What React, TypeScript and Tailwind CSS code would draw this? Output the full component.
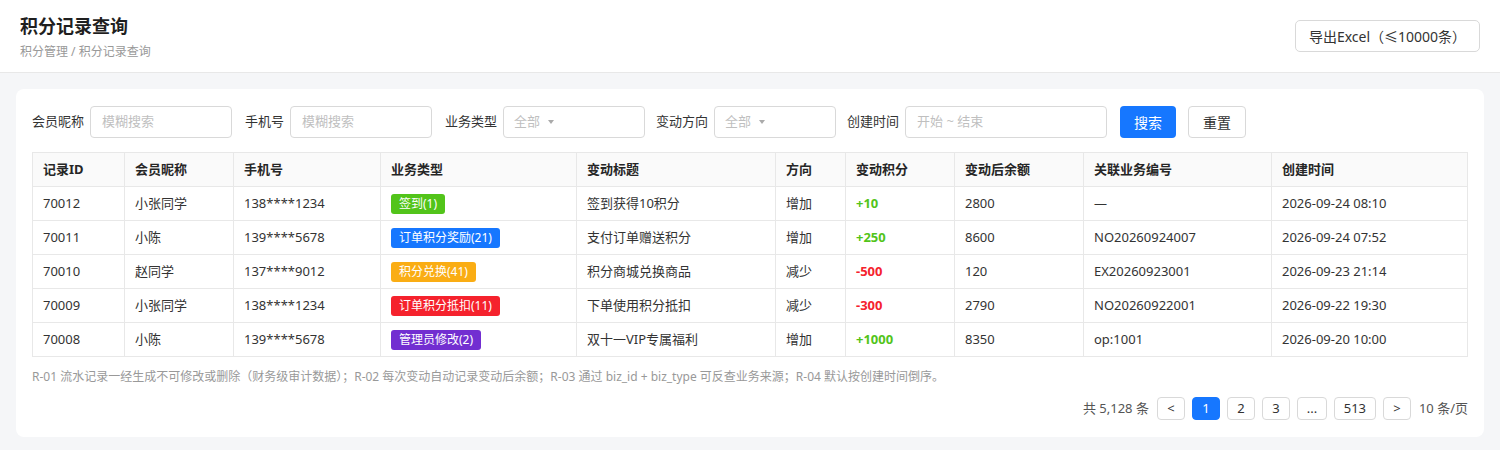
import React from 'react';

const font = { fontFamily: '"Noto Sans", "Noto Sans CJK SC", sans-serif' };

interface Row {
  id: string;
  name: string;
  phone: string;
  tag: string;
  tagColor: string;
  title: string;
  dir: string;
  points: string;
  balance: string;
  biz: string;
  time: string;
}

const rows: Row[] = [
  { id: '70012', name: '小张同学', phone: '138****1234', tag: '签到(1)', tagColor: 'bg-[#52c41a]', title: '签到获得10积分', dir: '增加', points: '+10', balance: '2800', biz: '—', time: '2026-09-24 08:10' },
  { id: '70011', name: '小陈', phone: '139****5678', tag: '订单积分奖励(21)', tagColor: 'bg-[#1677ff]', title: '支付订单赠送积分', dir: '增加', points: '+250', balance: '8600', biz: 'NO20260924007', time: '2026-09-24 07:52' },
  { id: '70010', name: '赵同学', phone: '137****9012', tag: '积分兑换(41)', tagColor: 'bg-[#faad14]', title: '积分商城兑换商品', dir: '减少', points: '-500', balance: '120', biz: 'EX20260923001', time: '2026-09-23 21:14' },
  { id: '70009', name: '小张同学', phone: '138****1234', tag: '订单积分抵扣(11)', tagColor: 'bg-[#f5222d]', title: '下单使用积分抵扣', dir: '减少', points: '-300', balance: '2790', biz: 'NO20260922001', time: '2026-09-22 19:30' },
  { id: '70008', name: '小陈', phone: '139****5678', tag: '管理员修改(2)', tagColor: 'bg-[#722ed1]', title: '双十一VIP专属福利', dir: '增加', points: '+1000', balance: '8350', biz: 'op:1001', time: '2026-09-20 10:00' },
];

const cols = [92, 109, 147, 196, 199, 70, 109, 129, 188, 196];
const heads = ['记录ID', '会员昵称', '手机号', '业务类型', '变动标题', '方向', '变动积分', '变动后余额', '关联业务编号', '创建时间'];

const Label = ({ children }: { children: React.ReactNode }) => (
  <span className="text-[13px] text-[#333] mr-[6px] whitespace-nowrap">{children}</span>
);

const Input = ({ w, placeholder }: { w: string; placeholder: string }) => (
  <div className={`${w} h-8 border border-[#d9d9d9] rounded-[4px] flex items-center px-[11px] text-[13px] text-[#bfbfbf] mr-[13px]`}>
    {placeholder}
  </div>
);

const Select = ({ w }: { w: string }) => (
  <div className={`${w} h-8 border border-[#d9d9d9] rounded-[4px] flex items-center px-[10px] text-[13px] text-[#bfbfbf] mr-[11px]`}>
    全部
    <span className="ml-[8px] w-0 h-0 border-l-[3px] border-r-[3px] border-t-[4px] border-l-transparent border-r-transparent border-t-[#aaa]" />
  </div>
);

const PageBtn = ({ children, active, w = 'w-[28px]' }: { children: React.ReactNode; active?: boolean; w?: string }) => (
  <div
    className={`${w} h-[23px] rounded-[4px] flex items-center justify-center text-[13px] ${
      active ? 'bg-[#1677ff] text-white border border-[#1677ff]' : 'border border-[#d9d9d9] text-[#333] bg-white'
    }`}
  >
    {children}
  </div>
);

export default function App() {
  return (
    <div className="w-[1500px] h-[450px] bg-[#f5f6f8] overflow-hidden" style={font}>
      <div className="h-[73px] bg-white border-b border-[#e8e8e8] flex items-start justify-between px-5">
        <div className="pt-[13px]">
          <div className="text-[18px] font-bold text-[#1f1f1f] leading-[26px]">积分记录查询</div>
          <div className="text-[12px] text-[#999] mt-[5px] leading-[16px]">积分管理 / 积分记录查询</div>
        </div>
        <div className="mt-5 h-8 w-[185px] border border-[#d9d9d9] rounded-[5px] flex items-center justify-center text-[14px] text-[#333]">
          导出Excel（≤10000条）
        </div>
      </div>

      <div className="px-4 pt-4">
        <div className="bg-white rounded-[8px] px-4 pt-[17px] pb-[17px]">
          <div className="flex items-center mb-[14px]">
            <Label>会员昵称</Label>
            <Input w="w-[142px]" placeholder="模糊搜索" />
            <Label>手机号</Label>
            <Input w="w-[142px]" placeholder="模糊搜索" />
            <Label>业务类型</Label>
            <Select w="w-[142px]" />
            <Label>变动方向</Label>
            <Select w="w-[122px]" />
            <Label>创建时间</Label>
            <Input w="w-[202px]" placeholder="开始 ~ 结束" />
            <div className="w-[56px] h-8 rounded-[4px] bg-[#1677ff] text-white text-[14px] flex items-center justify-center">搜索</div>
            <div className="w-[58px] h-8 rounded-[4px] border border-[#d9d9d9] text-[#333] text-[14px] flex items-center justify-center ml-[12px]">重置</div>
          </div>

          <table className="table-fixed border-collapse w-[1435px] text-[13px] text-[#333]">
            <colgroup>
              {cols.map((c, i) => (
                <col key={i} style={{ width: c }} />
              ))}
            </colgroup>
            <thead>
              <tr className="h-[34px] bg-[#fafafa]">
                {heads.map((h) => (
                  <th key={h} className="border border-[#e8e8e8] px-[10px] text-left font-bold text-[#262626]">
                    {h}
                  </th>
                ))}
              </tr>
            </thead>
            <tbody>
              {rows.map((r) => (
                <tr key={r.id} className="h-[34px]">
                  <td className="border border-[#e8e8e8] px-[10px]">{r.id}</td>
                  <td className="border border-[#e8e8e8] px-[10px]">{r.name}</td>
                  <td className="border border-[#e8e8e8] px-[10px]">{r.phone}</td>
                  <td className="border border-[#e8e8e8] px-[10px]">
                    <span className={`${r.tagColor} inline-flex items-center h-[20px] px-[8px] rounded-[3px] text-[12px] text-white`}>{r.tag}</span>
                  </td>
                  <td className="border border-[#e8e8e8] px-[10px]">{r.title}</td>
                  <td className="border border-[#e8e8e8] px-[10px]">{r.dir}</td>
                  <td className={`border border-[#e8e8e8] px-[10px] font-bold ${r.points.startsWith('+') ? 'text-[#52c41a]' : 'text-[#f5222d]'}`}>
                    {r.points}
                  </td>
                  <td className="border border-[#e8e8e8] px-[10px]">{r.balance}</td>
                  <td className="border border-[#e8e8e8] px-[10px]">{r.biz}</td>
                  <td className="border border-[#e8e8e8] px-[10px]">{r.time}</td>
                </tr>
              ))}
            </tbody>
          </table>

          <div className="mt-[11px] text-[12px] text-[#999] leading-[18px]">
            R-01 流水记录一经生成不可修改或删除（财务级审计数据）；R-02 每次变动自动记录变动后余额；R-03 通过 biz_id + biz_type 可反查业务来源；R-04 默认按创建时间倒序。
          </div>

          <div className="flex items-center justify-end gap-[7px] mt-[11px] text-[13px] text-[#555]">
            <span className="mr-[1px]">共 5,128 条</span>
            <PageBtn>&lt;</PageBtn>
            <PageBtn active>1</PageBtn>
            <PageBtn>2</PageBtn>
            <PageBtn>3</PageBtn>
            <PageBtn w="w-[30px]">...</PageBtn>
            <PageBtn w="w-[42px]">513</PageBtn>
            <PageBtn>&gt;</PageBtn>
            <span className="ml-[1px]">10 条/页</span>
          </div>
        </div>
      </div>
    </div>
  );
}
